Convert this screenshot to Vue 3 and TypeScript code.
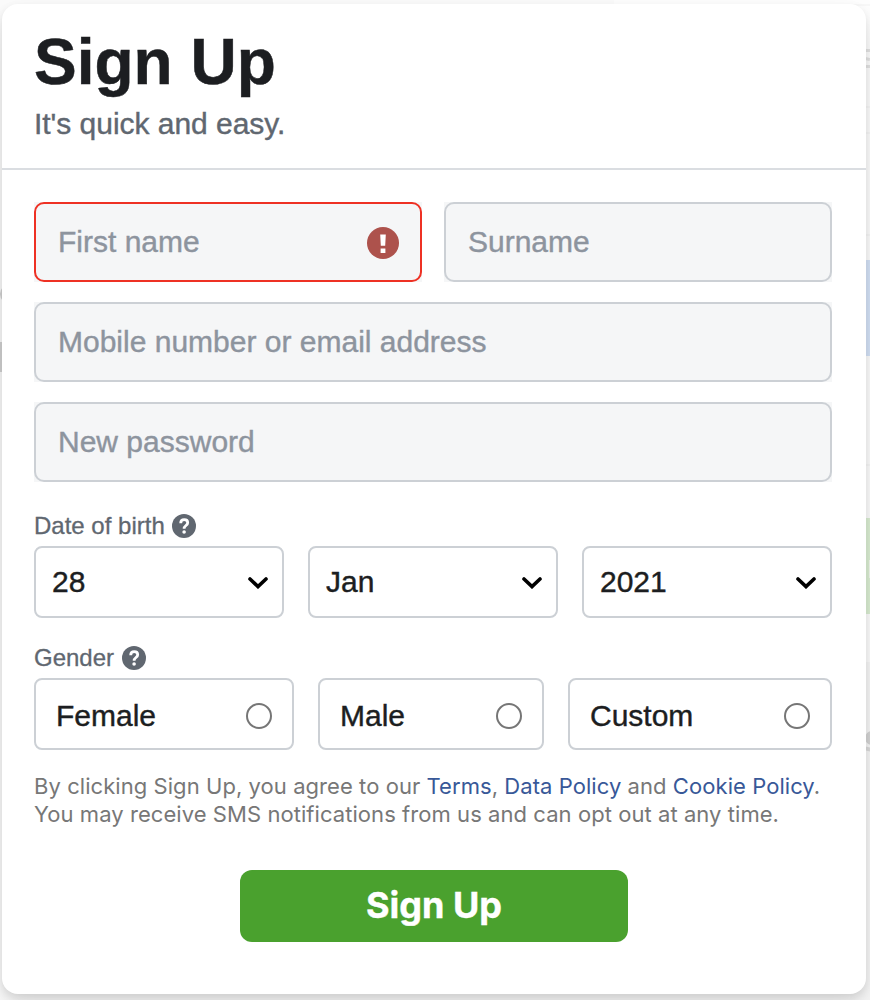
<script setup lang="ts">
import { ref } from 'vue'

interface Choice {
  label: string
  value: string
}

const firstName = ref('')
const surname = ref('')
const contact = ref('')
const password = ref('')
const gender = ref('')

const dateParts: Choice[] = [
  { label: 'Day', value: '28' },
  { label: 'Month', value: 'Jan' },
  { label: 'Year', value: '2021' },
]

const genders: Choice[] = [
  { label: 'Female', value: 'female' },
  { label: 'Male', value: 'male' },
  { label: 'Custom', value: 'custom' },
]
</script>

<template>
  <div class="page">
    <!-- Page content that shows around the dialog -->
    <div class="backdrop" aria-hidden="true">
      <i class="shape right-panel"></i>
      <i class="shape rule r1"></i>
      <i class="shape rule r2"></i>
      <i class="shape rule r3"></i>
      <i class="shape rule r4"></i>
      <i class="shape rule r5"></i>
      <i class="shape blue"></i>
      <i class="shape green"></i>
      <i class="shape green-mark"></i>
      <i class="shape footer"></i>
      <i class="shape left-dot"></i>
      <i class="shape left-bar"></i>
      <i class="shape stroke s1"></i>
      <i class="shape stroke s2"></i>
      <i class="shape stroke s3"></i>
      <i class="shape right-dot"></i>
      <i class="shape right-tail"></i>
    </div>

    <main class="card">
      <header class="head">
        <h1>Sign Up</h1>
        <p>It's quick and easy.</p>
      </header>

      <form class="form" @submit.prevent>
        <div class="names">
          <div class="field invalid">
            <input v-model="firstName" type="text" placeholder="First name" />
            <svg class="alert" viewBox="0 0 32 32" width="32" height="32">
              <circle cx="16" cy="16" r="16" fill="#ad524c" />
              <path d="M13.2 7.6h5.6l-.6 11.2h-4.4zM13.6 21.4h4.8v4.6h-4.8z" fill="#fff" />
            </svg>
          </div>
          <div class="field">
            <input v-model="surname" type="text" placeholder="Surname" />
          </div>
        </div>
        <div class="field">
          <input v-model="contact" type="text" placeholder="Mobile number or email address" />
        </div>
        <div class="field">
          <input v-model="password" type="password" placeholder="New password" />
        </div>

        <div class="caption dob">
          <span>Date of birth</span>
          <svg class="help" viewBox="0 0 24 24" width="24" height="24">
            <circle cx="12" cy="12" r="12" fill="#606770" />
            <path d="M8.7 9.2c0-2.3 1.4-3.5 3.5-3.5s3.5 1.2 3.5 3c0 2.9-3.6 2.8-3.6 6" fill="none" stroke="#fff" stroke-width="2.8" />
            <circle cx="12.1" cy="18" r="1.8" fill="#fff" />
          </svg>
        </div>
        <div class="dates">
          <div v-for="part in dateParts" :key="part.label" class="picker">
            <select :aria-label="part.label">
              <option>{{ part.value }}</option>
            </select>
            <svg class="chevron" viewBox="0 0 20 12" width="20" height="12">
              <path d="M2 2l8 7.6L18 2" fill="none" stroke="#000" stroke-width="3.6" stroke-linecap="round" stroke-linejoin="miter" />
            </svg>
          </div>
        </div>

        <div class="caption gender">
          <span>Gender</span>
          <svg class="help" viewBox="0 0 24 24" width="24" height="24">
            <circle cx="12" cy="12" r="12" fill="#606770" />
            <path d="M8.7 9.2c0-2.3 1.4-3.5 3.5-3.5s3.5 1.2 3.5 3c0 2.9-3.6 2.8-3.6 6" fill="none" stroke="#fff" stroke-width="2.8" />
            <circle cx="12.1" cy="18" r="1.8" fill="#fff" />
          </svg>
        </div>
        <div class="genders">
          <label v-for="item in genders" :key="item.value" class="option">
            <span>{{ item.label }}</span>
            <input v-model="gender" type="radio" name="gender" :value="item.value" />
          </label>
        </div>

        <p class="legal">
          <span class="line first">By clicking Sign Up, you agree to our <a>Terms</a>, <a>Data Policy</a> and <a>Cookie Policy</a>.</span>
          <span class="line second">You may receive SMS notifications from us and can opt out at any time.</span>
        </p>

        <button class="submit" type="submit">Sign Up</button>
      </form>
    </main>
  </div>
</template>

<style>
body {
  margin: 0;
}
</style>

<style scoped>
* {
  box-sizing: border-box;
}

.page {
  position: relative;
  width: 870px;
  height: 1000px;
  padding: 4px 4px 6px 2px;
  overflow: hidden;
  background: #fbfbfb;
  font-family: "Liberation Sans", Arial, sans-serif;
}

.backdrop {
  position: absolute;
  inset: 0;
}

.shape {
  position: absolute;
  display: block;
}

.right-panel { left: 614px; right: 0; top: 0; height: 665px; background: #fefefe; }
.rule { left: 850px; width: 20px; height: 2px; background: #f8f8f8; }
.r1 { top: 4px; }
.r2 { top: 106px; }
.r3 { top: 132px; }
.r4 { top: 234px; }
.r5 { top: 464px; }
.blue { left: 850px; width: 20px; top: 260px; height: 96px; background: #d5e3f8; }
.green { left: 850px; width: 20px; top: 518px; height: 96px; background: #dcf0d4; }
.green-mark { left: 869px; width: 1px; top: 560px; height: 18px; background: #f2f8ee; }
.footer { left: 850px; width: 20px; top: 662px; bottom: 0; background: #f8f8f8; }
.left-dot { left: 0; top: 284px; width: 20px; height: 20px; border-radius: 10px; background: #d2d2d2; }
.left-bar { left: 0; top: 342px; width: 4px; height: 30px; background: #d2d2d2; }
.stroke { left: 860px; width: 10px; height: 3px; background: #e4e4e4; }
.s1 { top: 49px; }
.s2 { top: 57px; transform: rotate(12deg); }
.s3 { top: 65px; }
.right-dot { left: 865px; top: 731px; width: 14px; height: 14px; border-radius: 7px; background: #d6d6d6; }
.right-tail { left: 864px; top: 747px; width: 8px; height: 4px; background: #dcdcdc; transform: rotate(12deg); }

.card {
  position: relative;
  width: 864px;
  height: 990px;
  border-radius: 16px;
  background: #fff;
  box-shadow: 0 4px 8px rgba(0, 0, 0, 0.1), 0 16px 32px rgba(0, 0, 0, 0.1);
}

.head {
  height: 166px;
  padding: 26px 32px 0;
  border-bottom: 2px solid #dadde1;
}

h1 {
  margin: 0;
  color: #1c1e21;
  font-size: 64px;
  font-weight: 700;
  line-height: 64px;
  -webkit-text-stroke: 0.5px currentColor;
}

.head p {
  margin: 12px 0 0;
  color: #606770;
  font-size: 30px;
  line-height: 36px;
  letter-spacing: -0.03px;
  -webkit-text-stroke: 0.4px currentColor;
}

.form {
  display: flex;
  flex-direction: column;
  gap: 20px;
  padding: 32px 34px 0 32px;
}

.names {
  display: flex;
  gap: 22px;
}

.names .field {
  flex: 1;
}

.field {
  position: relative;
  height: 80px;
  background: #f5f6f7;
}

.field input {
  display: block;
  width: 100%;
  height: 100%;
  padding: 0 22px;
  border: 2px solid #ccd0d5;
  border-radius: 10px;
  outline: 0;
  background: #f5f6f7;
  color: #1c1e21;
  font: 30px "Liberation Sans", Arial, sans-serif;
  -webkit-text-stroke: 0.4px currentColor;
}

.field input::placeholder {
  color: #8d949e;
  opacity: 1;
}

.invalid input {
  border-color: #ee3124;
}

.alert {
  position: absolute;
  top: 25px;
  right: 23px;
}

.caption {
  display: flex;
  align-items: center;
  gap: 7.5px;
  height: 24px;
  color: #606770;
  font-size: 24px;
  line-height: 24px;
  -webkit-text-stroke: 0.3px currentColor;
}

.help {
  -webkit-text-stroke: 0;
}

.dob {
  gap: 7px;
  margin: 12px 0 -12px;
}

.dates {
  display: grid;
  grid-template-columns: repeat(3, 250px);
  justify-content: space-between;
}

.picker {
  position: relative;
  height: 72px;
}

.picker select {
  width: 100%;
  height: 100%;
  padding: 0 16px 2px;
  appearance: none;
  border: 2px solid #ccd0d5;
  border-radius: 8px;
  background: #fff;
  color: #1c1e21;
  font: 30px "Liberation Sans", Arial, sans-serif;
  -webkit-text-stroke: 0.4px currentColor;
}

.chevron {
  position: absolute;
  top: 31px;
  right: 16px;
}

.gender {
  margin: 8px 0 -12px;
}

.genders {
  display: grid;
  grid-template-columns: 260px 226px 264px;
  justify-content: space-between;
}

.option {
  display: flex;
  align-items: center;
  justify-content: space-between;
  height: 72px;
  padding: 3px 20px 0;
  border: 2px solid #ccd0d5;
  border-radius: 8px;
  color: #1c1e21;
  font-size: 30px;
  -webkit-text-stroke: 0.4px currentColor;
}

.option input {
  width: 26px;
  height: 26px;
  margin: 0;
  appearance: none;
  border: 2px solid #767676;
  border-radius: 50%;
  background: #fff;
}

.legal {
  margin: 2px 0 0;
  color: #777;
  font-family: Inter, sans-serif;
  font-size: 22px;
  line-height: 28px;
  letter-spacing: 0.06px;
}

.line {
  display: block;
  white-space: nowrap;
}

.legal a {
  color: #385898;
}

.submit {
  width: 388px;
  height: 72px;
  margin: 22px 0 0 206px;
  padding: 0 0 2px;
  border: 0;
  border-radius: 12px;
  background: #4aa12e;
  color: #fff;
  font: 700 36px Inter, sans-serif;
  -webkit-text-stroke: 0.4px currentColor;
}
</style>
